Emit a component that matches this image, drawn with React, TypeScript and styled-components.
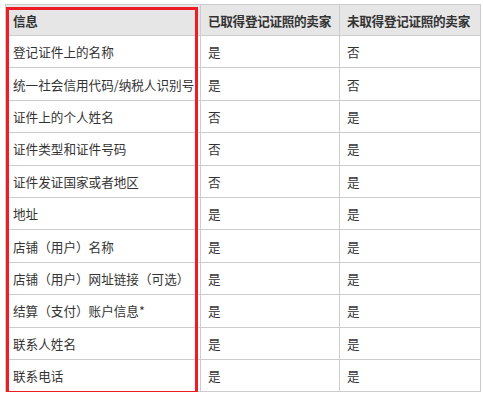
import styled, { createGlobalStyle } from "styled-components";

const GlobalStyle = createGlobalStyle`
  body {
    margin: 0;
    background: #ffffff;
    font-family: "Noto Sans CJK SC", "Noto Sans", sans-serif;
  }
`;

type Row = [string, string, string];

const rows: Row[] = [
  ["登记证件上的名称", "是", "否"],
  ["统一社会信用代码/纳税人识别号", "是", "否"],
  ["证件上的个人姓名", "否", "是"],
  ["证件类型和证件号码", "否", "是"],
  ["证件发证国家或者地区", "否", "是"],
  ["地址", "是", "是"],
  ["店铺（用户）名称", "是", "是"],
  ["店铺（用户）网址链接（可选）", "是", "是"],
  ["结算（支付）账户信息*", "是", "是"],
  ["联系人姓名", "是", "是"],
  ["联系电话", "是", "是"],
];

export default function App() {
  return (
    <>
      <GlobalStyle />
      <Page>
        <Wrap>
          <Table>
            <colgroup>
              <col style={{ width: 195 }} />
              <col style={{ width: 139 }} />
              <col style={{ width: 141 }} />
            </colgroup>
            <thead>
              <tr>
                <Th>信息</Th>
                <Th>已取得登记证照的卖家</Th>
                <Th>未取得登记证照的卖家</Th>
              </tr>
            </thead>
            <tbody>
              {rows.map((r, k) => (
                <tr key={k}>
                  {r.map((c, i) => <Td key={i}>{c}</Td>)}
                </tr>
              ))}
            </tbody>
          </Table>
          <Highlight />
        </Wrap>
      </Page>
    </>
  );
}

const Page = styled.div`
  padding: 4px 0 0 5px;
`;

const Wrap = styled.div`
  position: relative;
  width: 475px;
`;

const Table = styled.table`
  width: 475px;
  border-collapse: collapse;
  table-layout: fixed;
  color: #333333;
  font-size: 12.6px;
`;

const Th = styled.th`
  height: 31px;
  padding: 0 0 0 7px;
  box-sizing: border-box;
  text-align: left;
  font-weight: bold;
  background: #e6e6e6;
  border: 1px solid #cccccc;
  white-space: nowrap;
  letter-spacing: -0.3px;
`;

const Td = styled.td`
  height: 32.4px;
  padding: 0 0 0 7px;
  box-sizing: border-box;
  border: 1px solid #cccccc;
  white-space: nowrap;
`;

const Highlight = styled.div`
  position: absolute;
  left: 1px;
  top: 3px;
  width: 192px;
  height: 387px;
  box-sizing: border-box;
  border: 3px solid #ee1c25;
  pointer-events: none;
`;
